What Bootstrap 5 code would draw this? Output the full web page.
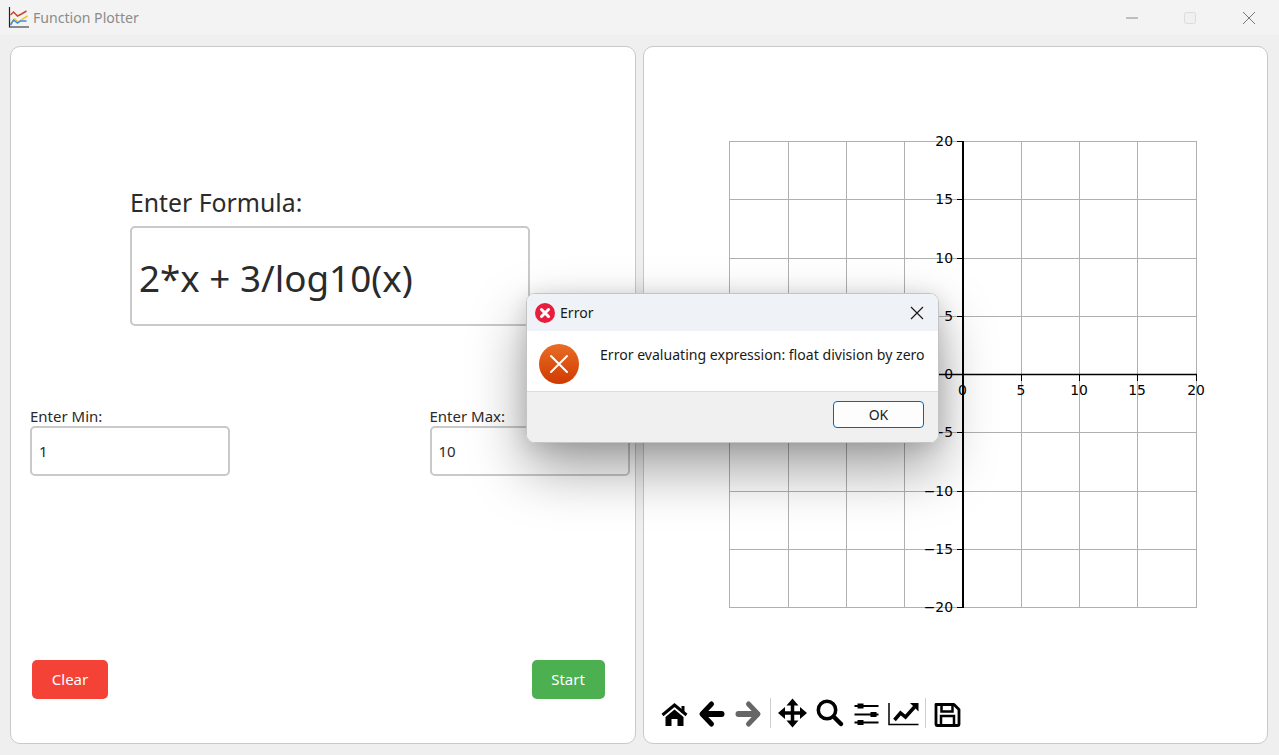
<!DOCTYPE html>
<html lang="en">

<head>
  <meta charset="UTF-8">
  <meta name="viewport" content="width=device-width, initial-scale=1">
  <title>Function Plotter</title>
  <link href="https://cdn.jsdelivr.net/npm/bootstrap@5.3.0/dist/css/bootstrap.min.css" rel="stylesheet">
  <style>
    body {
      font-family: "Noto Sans", "Open Sans", sans-serif;
      background-color: #efefef;
      color: #2b2b2b;
      height: 755px;
      overflow: hidden;
    }

    .title-bar {
      height: 35px;
      background-color: #f3f3f3;
      padding: 0 1px 0 8px;
      color: #8b8b8b;
      font-size: 14.1px;
    }

    .title-icon {
      margin-right: 3px;
    }

    .win-btn {
      width: 58.5px;
      height: 35px;
    }

    .panes {
      height: 720px;
      padding: 11px 11px 11px 10px;
      gap: 7px;
    }

    .pane {
      flex: 1 1 0;
      background-color: #fff;
      border: 1px solid #c9c9c9;
      border-radius: 10px;
    }

    .formula-group {
      margin: 138px 0 0 119px;
      width: 400px;
    }

    .formula-label {
      font-size: 24.8px;
      line-height: 34px;
      margin-bottom: 7px;
    }

    .field {
      border: 2px solid #c9c9c9;
      border-radius: 5px;
      color: #2b2b2b;
      padding: 0 7px;
    }

    .formula-input {
      height: 100px;
      font-size: 36.8px;
      padding-top: 3px;
    }

    .range-row {
      margin-top: 80px;
      padding: 0 5px 0 19px;
    }

    .range-group {
      width: 200px;
    }

    .range-label {
      font-size: 15px;
      line-height: 20px;
      margin-bottom: 0;
    }

    .range-input {
      height: 50px;
      font-size: 15px;
    }

    .action-row {
      margin-top: auto;
      padding: 0 30px 44px 21px;
    }

    .action-btn {
      height: 39px;
      border: 0;
      border-radius: 5px;
      color: #fff;
      font-size: 15px;
      padding: 0;
    }

    .clear-btn {
      width: 76px;
      background-color: #f44336;
    }

    .start-btn {
      width: 73px;
      background-color: #4caf50;
    }

    .plot-svg {
      display: block;
      width: 623px;
      height: 650px;
    }

    .plot-svg text {
      font-family: "DejaVu Sans", sans-serif;
      font-size: 13.9px;
      fill: #000;
    }

    .tool-bar {
      padding-left: 12.5px;
      height: 32px;
    }

    .tool-btn {
      width: 37px;
      height: 32px;
      flex: none;
    }

    .tool-sep {
      width: 7px;
      flex: none;
    }

    .tool-sep::after {
      content: "";
      display: block;
      width: 1px;
      height: 30px;
      margin-left: 3px;
      background-color: #cfcfcf;
    }

    .error-box {
      position: absolute;
      left: 526px;
      top: 293px;
      width: 413px;
      height: 150px;
      border: 1px solid #c4c4c4;
      border-radius: 9px;
      overflow: hidden;
      background-color: #fff;
      font-size: 14.08px;
      color: #1a1a1a;
    }

    .error-shadow {
      position: absolute;
      left: 526px;
      top: 293px;
      width: 413px;
      height: 150px;
      border-radius: 9px;
      box-shadow: 0 26px 56px rgba(0, 0, 0, .38), 0 2px 20px rgba(0, 0, 0, .12);
    }

    .error-head {
      height: 37px;
      background-color: #eff3f7;
      padding: 0 14px 0 8px;
    }

    .error-title {
      margin-left: 1px;
    }

    .error-body {
      height: 60px;
      padding: 13px 12px 0 12px;
    }

    .error-text {
      margin-left: 21px;
    }

    .error-foot {
      height: 51px;
      background-color: #f0f0f0;
      border-top: 1px solid #dcdcdc;
      padding: 9px 14px 0 0;
    }

    .ok-btn {
      width: 91px;
      height: 27px;
      background-color: #fdfdfd;
      border: 1px solid #0067c0;
      border-radius: 4px;
      font-size: 14px;
      line-height: 1;
      padding: 0;
      color: #1a1a1a;
    }
  </style>
</head>

<body>
  <!-- Title bar -->
  <div class="title-bar d-flex align-items-center">
    <svg width="22" height="22" viewBox="0 0 22 22" class="title-icon flex-shrink-0">
      <path d="M1.500 0v20H21" fill="none" stroke="#222" stroke-width="1.200" />
      <path d="M2.500 8l3-3 4 4 4-2 5-3" fill="none" stroke="#c8492f" stroke-width="1.500" />
      <path d="M2.500 17l4-5 4 3 4-3 5-3" fill="none" stroke="#f2c522" stroke-width="1.500" />
      <path d="M2.500 18l3-5 4 3 3-2 6 0" fill="none" stroke="#3d8fdc" stroke-width="1.500" />
    </svg>
    <span>Function Plotter</span>
    <div class="ms-auto d-flex">
      <div class="win-btn d-flex align-items-center justify-content-center">
        <svg width="12" height="12"><path d="M0 6h12" stroke="#8a8a8a" /></svg>
      </div>
      <div class="win-btn d-flex align-items-center justify-content-center">
        <svg width="12" height="12"><rect x=".5" y=".5" width="11" height="11" rx="2" fill="#f0f0f0" stroke="#dcdcdc" /></svg>
      </div>
      <div class="win-btn d-flex align-items-center justify-content-center">
        <svg width="12" height="12"><path d="M0 0l12 12M12 0L0 12" stroke="#777" /></svg>
      </div>
    </div>
  </div>

  <div class="panes d-flex">
    <!-- Inputs -->
    <div class="pane d-flex flex-column">
      <div class="formula-group">
        <label class="formula-label d-block" for="formula">Enter Formula:</label>
        <input id="formula" class="field formula-input form-control shadow-none" value="2*x + 3/log10(x)">
      </div>
      <div class="range-row d-flex justify-content-between">
        <div class="range-group">
          <label class="range-label d-block" for="minVal">Enter Min:</label>
          <input id="minVal" class="field range-input form-control shadow-none" value="1">
        </div>
        <div class="range-group">
          <label class="range-label d-block" for="maxVal">Enter Max:</label>
          <input id="maxVal" class="field range-input form-control shadow-none" value="10">
        </div>
      </div>
      <div class="action-row d-flex justify-content-between">
        <button class="btn action-btn clear-btn">Clear</button>
        <button class="btn action-btn start-btn">Start</button>
      </div>
    </div>

    <!-- Plot -->
    <div class="pane d-flex flex-column">
      <svg class="plot-svg" id="plot" viewBox="644 47 623 650"></svg>
      <div class="tool-bar d-flex align-items-center">
        <svg class="tool-btn" viewBox="-2.500 0 37 32">
          <path d="M4 18L16 8l12 10" fill="none" stroke="#000" stroke-width="3" />
          <path d="M23 9h3v7h-3zM7 20l9-7.500 9 7.500v9h-6v-7h-6v7H7z" />
        </svg>
        <svg class="tool-btn" viewBox="-2.500 0 37 32">
          <path d="M16 7L6.500 17l9.500 10" fill="none" stroke="#000" stroke-width="5" stroke-linecap="round" stroke-linejoin="round" />
          <path d="M8 17h18" fill="none" stroke="#000" stroke-width="6" stroke-linecap="round" />
        </svg>
        <svg class="tool-btn" viewBox="-2.500 0 37 32">
          <path d="M16 7l9.500 10L16 27" fill="none" stroke="#666" stroke-width="5" stroke-linecap="round" stroke-linejoin="round" />
          <path d="M6 17h18" fill="none" stroke="#666" stroke-width="6" stroke-linecap="round" />
        </svg>
        <div class="tool-sep"></div>
        <svg class="tool-btn" viewBox="-2.500 0 37 32">
          <path d="M16 4v24M4 16h24" stroke="#000" stroke-width="3.500" />
          <path d="M16 1.500l6 7H10zM16 30.500l6-7H10zM1.500 16l7-6v12zM30.500 16l-7-6v12z" />
        </svg>
        <svg class="tool-btn" viewBox="-2.500 0 37 32">
          <circle cx="13.500" cy="13" r="8.700" fill="none" stroke="#000" stroke-width="3.500" />
          <path d="M20.500 20l7 7" stroke="#000" stroke-width="4.500" stroke-linecap="round" />
        </svg>
        <svg class="tool-btn" viewBox="-2.500 0 37 32">
          <path d="M4 9h24M4 17.500h24M4 25.500h24" stroke="#000" stroke-width="2" />
          <path d="M7 6.500h6v5H7zM20 15h6v5h-6zM7 23h6v5H7z" />
        </svg>
        <svg class="tool-btn" viewBox="-2.500 0 37 32">
          <path d="M1.500 6v21.500H31" fill="none" stroke="#000" stroke-width="1.500" />
          <path d="M7 23l6-7 5 4 9-10" fill="none" stroke="#000" stroke-width="3.500" />
          <path d="M22.500 6H31v8.500z" />
        </svg>
        <div class="tool-sep"></div>
        <svg class="tool-btn" viewBox="-2.500 0 37 32">
          <path d="M4.500 7.500h18l5 5v15a1 1 0 0 1-1 1h-21a1 1 0 0 1-1-1z" fill="none" stroke="#000" stroke-width="2.800" stroke-linejoin="round" />
          <path d="M10 7.500v7h11v-7M9.500 28v-9h13v9" fill="none" stroke="#000" stroke-width="2.500" />
        </svg>
      </div>
    </div>
  </div>

  <!-- Error dialog -->
  <div class="error-shadow"></div>
  <div class="error-box">
    <div class="error-head d-flex align-items-center">
      <svg width="20" height="20" viewBox="0 0 20 20" class="flex-shrink-0 me-1">
        <circle cx="10" cy="10" r="10" fill="#e81e3f" />
        <path d="M6.500 6.500l7 7M13.500 6.500l-7 7" stroke="#fff" stroke-width="3" stroke-linecap="round" />
      </svg>
      <span class="error-title">Error</span>
      <svg width="14" height="14" class="ms-auto"><path d="M1 1l12 12M13 1L1 13" stroke="#1a1a1a" stroke-width="1.200" /></svg>
    </div>
    <div class="error-body d-flex">
      <svg width="40" height="40" viewBox="0 0 40 40" class="flex-shrink-0">
        <defs>
          <linearGradient id="stopFill" x1="0" y1="0" x2="0" y2="1">
            <stop offset="0" stop-color="#e96d25" />
            <stop offset="1" stop-color="#cf3a00" />
          </linearGradient>
        </defs>
        <circle cx="20" cy="20" r="20" fill="url(#stopFill)" />
        <path d="M12 12l16 16M28 12L12 28" stroke="#fff" stroke-width="2" stroke-linecap="round" />
      </svg>
      <div class="error-text text-nowrap">Error evaluating expression: float division by zero</div>
    </div>
    <div class="error-foot d-flex justify-content-end">
      <button class="btn ok-btn">OK</button>
    </div>
  </div>

  <script>
    // matplotlib style axes, drawn in page coordinates
    const xs = [729.5, 788.5, 846.5, 904.5, 963, 1021.5, 1079.5, 1137.5, 1196.5];
    const ys = [141.5, 199.5, 258.5, 316.5, 374.5, 432.5, 491.5, 549.5, 607.5];
    const yLabels = ['20', '15', '10', '5', '0', '\u22125', '\u221210', '\u221215', '\u221220'];
    const xLabels = { 4: '0', 5: '5', 6: '10', 7: '15', 8: '20' };
    let out = '';

    xs.forEach(x => {
      if (x !== 963) out += `<line x1="${x}" x2="${x}" y1="141" y2="608" stroke="#b0b0b0"/>`;
    });
    ys.forEach((y, i) => {
      out += `<line x1="729" x2="1197" y1="${y}" y2="${y}" stroke="#b0b0b0"/>`;
      out += `<line x1="957" x2="963" y1="${y}" y2="${y}" stroke="#000"/>`;
      out += `<text x="953" y="${y + 4}" text-anchor="end">${yLabels[i]}</text>`;
    });
    Object.keys(xLabels).forEach(i => {
      const x = xs[i];
      out += `<line x1="${x}" x2="${x}" y1="374" y2="381" stroke="#000"/>`;
      out += `<text x="${x - 0.5}" y="395" text-anchor="middle">${xLabels[i]}</text>`;
    });
    out += '<line x1="963" x2="963" y1="141" y2="608" stroke="#000" stroke-width="2"/>';
    out += '<line x1="729" x2="1197" y1="374.500" y2="374.500" stroke="#000" stroke-width="1.500"/>';
    document.getElementById('plot').innerHTML = out;
  </script>

  <script src="https://cdn.jsdelivr.net/npm/bootstrap@5.3.0/dist/js/bootstrap.bundle.min.js"></script>
</body>

</html>
